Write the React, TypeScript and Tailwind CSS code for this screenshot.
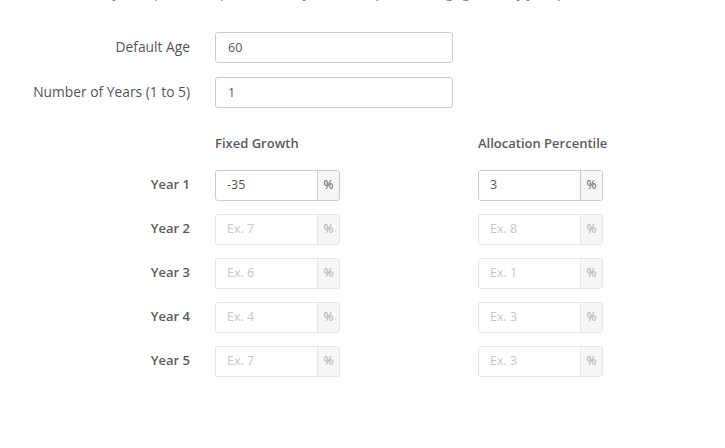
const years = [
  { label: 'Year 1', growth: '-35', growthPh: 'Ex. 5', alloc: '3', allocPh: 'Ex. 5' },
  { label: 'Year 2', growth: '', growthPh: 'Ex. 7', alloc: '', allocPh: 'Ex. 8' },
  { label: 'Year 3', growth: '', growthPh: 'Ex. 6', alloc: '', allocPh: 'Ex. 1' },
  { label: 'Year 4', growth: '', growthPh: 'Ex. 4', alloc: '', allocPh: 'Ex. 3' },
  { label: 'Year 5', growth: '', growthPh: 'Ex. 7', alloc: '', allocPh: 'Ex. 3' },
];

function PercentInput({ value, placeholder, active }: { value: string; placeholder: string; active: boolean }) {
  return (
    <div
      className={
        'flex h-[31px] w-[125px] rounded-[3px] border ' +
        (active ? 'border-[#cccccc]' : 'border-[#e6e6e6]')
      }
    >
      <input
        defaultValue={value}
        placeholder={placeholder}
        className="w-[101px] min-w-0 rounded-l-[3px] bg-white px-[11px] text-[12.5px] text-[#555] outline-none placeholder:text-[#c8c8c8]"
      />
      <span
        className={
          'flex flex-1 items-center justify-center rounded-r-[3px] border-l bg-[#f7f7f7] text-[12px] ' +
          (active ? 'border-[#cccccc] text-[#555]' : 'border-[#e6e6e6] text-[#aaa]')
        }
      >
        %
      </span>
    </div>
  );
}

export default function App() {
  return (
    <div className="h-[448px] w-[725px] overflow-hidden bg-white font-['Open_Sans',sans-serif] text-[13px] text-[#555]">
      <p className="mt-[-17px] h-[20px] whitespace-nowrap pl-[60px] leading-[20px] text-[#777]">
        Now, why not open a new plan for each year to accept the savings growth by your plan.
      </p>

      <div className="mt-[29px] flex flex-col gap-[14px]">
        <div className="flex items-center">
          <label className="w-[190px] text-right text-[13.8px]">Default Age</label>
          <input
            defaultValue="60"
            className="ml-[25px] h-[31px] w-[238px] rounded-[3px] border border-[#cccccc] px-[12px] text-[12.5px] text-[#555] outline-none"
          />
        </div>
        <div className="flex items-center">
          <label className="w-[190px] text-right text-[13.8px]">Number of Years (1 to 5)</label>
          <input
            defaultValue="1"
            className="ml-[25px] h-[31px] w-[238px] rounded-[3px] border border-[#cccccc] px-[12px] text-[12.5px] text-[#555] outline-none"
          />
        </div>
      </div>

      <div className="mt-[26px] flex font-semibold text-[#5a5a5a]">
        <div className="w-[215px]" />
        <div className="w-[263px]">Fixed Growth</div>
        <div>Allocation Percentile</div>
      </div>

      <div className="mt-[16px] flex flex-col gap-[13px]">
        {years.map((y, i) => (
          <div key={y.label} className="flex items-center">
            <div className="w-[190px] text-right font-semibold text-[#5a5a5a]">{y.label}</div>
            <div className="ml-[25px] w-[263px]">
              <PercentInput value={y.growth} placeholder={y.growthPh} active={i === 0} />
            </div>
            <PercentInput value={y.alloc} placeholder={y.allocPh} active={i === 0} />
          </div>
        ))}
      </div>
    </div>
  );
}
